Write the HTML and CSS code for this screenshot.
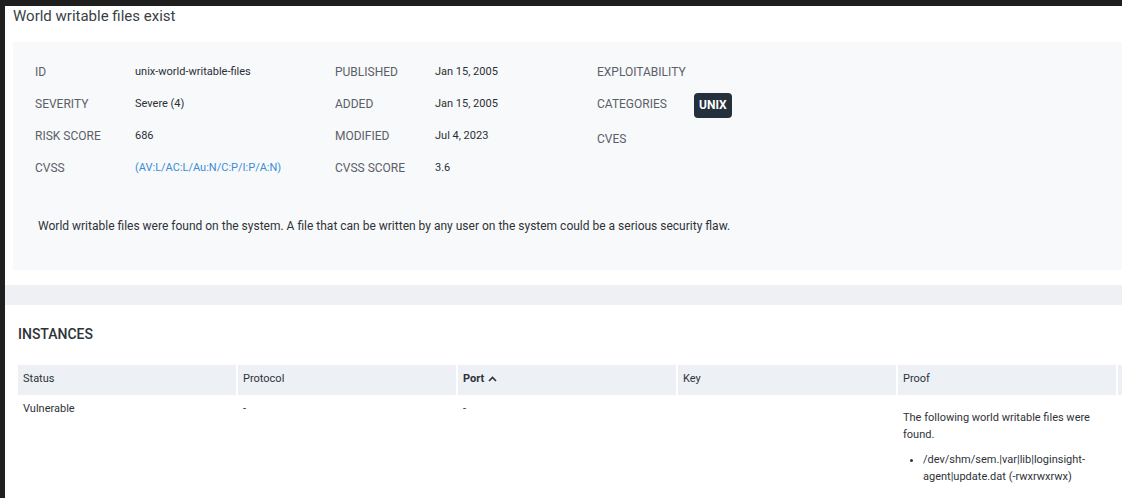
FILE: index.html
```html
<!DOCTYPE html>
<html lang="en">
<head>
    <meta charset="UTF-8">
    <title>World writable files exist</title>
    <link rel="stylesheet" href="styles.css">
</head>
<body>
    <div class="page">
        <h1 class="title">World writable files exist</h1>

        <div class="summary">
            <div class="fields">
                <div class="group group-1">
                    <div class="field"><span class="label">ID</span><span class="value">unix-world-writable-files</span></div>
                    <div class="field"><span class="label">SEVERITY</span><span class="value">Severe (4)</span></div>
                    <div class="field"><span class="label">RISK SCORE</span><span class="value">686</span></div>
                    <div class="field"><span class="label">CVSS</span><a class="value link" href="#">(AV:L/AC:L/Au:N/C:P/I:P/A:N)</a></div>
                </div>
                <div class="group group-2">
                    <div class="field"><span class="label">PUBLISHED</span><span class="value">Jan 15, 2005</span></div>
                    <div class="field"><span class="label">ADDED</span><span class="value">Jan 15, 2005</span></div>
                    <div class="field"><span class="label">MODIFIED</span><span class="value">Jul 4, 2023</span></div>
                    <div class="field"><span class="label">CVSS SCORE</span><span class="value">3.6</span></div>
                </div>
                <div class="group group-3">
                    <div class="field"><span class="label">EXPLOITABILITY</span><span class="value"></span></div>
                    <div class="field field-tags"><span class="label">CATEGORIES</span><span class="value"><span class="tag">UNIX</span></span></div>
                    <div class="field"><span class="label">CVES</span><span class="value"></span></div>
                </div>
            </div>
            <p class="description">World writable files were found on the system. A file that can be written by any user on the system could be a serious security flaw.</p>
        </div>

        <div class="divider"></div>

        <div class="instances">
            <h2>INSTANCES</h2>
            <table class="grid">
                <thead>
                    <tr>
                        <th>Status</th>
                        <th>Protocol</th>
                        <th class="sorted">Port <svg width="9" height="6" viewBox="0 0 9 6"><path d="M1 5 L4.5 1.5 L8 5" fill="none" stroke="#2e3338" stroke-width="1.6"/></svg></th>
                        <th>Key</th>
                        <th>Proof</th>
                        <th></th>
                    </tr>
                </thead>
                <tbody>
                    <tr>
                        <td>Vulnerable</td>
                        <td>-</td>
                        <td>-</td>
                        <td></td>
                        <td class="proof">
                            <p>The following world writable files were found.</p>
                            <ul>
                                <li>/dev/shm/sem.|var|lib|loginsight-agent|update.dat (-rwxrwxrwx)</li>
                            </ul>
                        </td>
                        <td></td>
                    </tr>
                </tbody>
            </table>
        </div>
    </div>
</body>
</html>
```

FILE: styles.css
```css
html, body {
    margin: 0;
    height: 100%;
}
body {
    font-family: Roboto, 'Liberation Sans', Arial, sans-serif;
    background-color: #1f1f1f;
    padding: 6px 0 0 5px;
    box-sizing: border-box;
    overflow: hidden;
}
.page {
    background: #ffffff;
    min-height: 100%;
    width: 1400px;
    color: #2e3338;
}
.title {
    margin: 0;
    padding: 1px 0 0 8px;
    font-size: 15px;
    font-weight: 400;
    line-height: 18px;
    color: #3a3f47;
    height: 35px;
}
.summary {
    margin-left: 8px;
    background-color: #f8f9fb;
    padding: 14px 22px 0;
    height: 228px;
    box-sizing: border-box;
}
.fields {
    display: flex;
}
.group {
    display: flex;
    flex-direction: column;
}
.group-1 {
    width: 300px;
}
.group-2 {
    width: 262px;
}
.field {
    display: flex;
    align-items: center;
    height: 32px;
    font-size: 12px;
}
.field-tags {
    height: 35px;
    align-items: flex-start;
}
.field-tags .label {
    line-height: 32px;
}
.label {
    color: #5b6068;
    width: 100px;
    flex-shrink: 0;
}
.group-3 .label {
    width: 97px;
}
.value {
    color: #2a2f35;
    font-size: 11px;
    margin-top: -1px;
}
.link {
    color: #3a8ed6;
    text-decoration: none;
}
.tag {
    display: inline-block;
    margin-top: 6px;
    background-color: #25303d;
    color: #ffffff;
    font-weight: 700;
    font-size: 12px;
    line-height: 25px;
    height: 25px;
    padding: 0 5px;
    border-radius: 4px;
}
.description {
    margin: 34px 0 0 3px;
    font-size: 12px;
    line-height: 16px;
    color: #2e3338;
}
.divider {
    margin-top: 15px;
    height: 20px;
    background-color: #eef0f4;
}
.instances {
    padding: 0 0 0 11px;
}
.instances h2 {
    margin: 0;
    padding: 21px 0 0 2px;
    font-size: 14px;
    font-weight: 500;
    line-height: 16px;
    color: #2e3338;
    height: 39px;
}
.grid {
    width: 1322px;
    border-collapse: separate;
    border-spacing: 2px 0;
    table-layout: fixed;
    font-size: 11px;
    color: #2e3338;
}
.grid th {
    background-color: #edf0f4;
    text-align: left;
    font-weight: 400;
    height: 30px;
    padding: 0 5px 4px;
    box-sizing: border-box;
}
.grid th.sorted {
    font-weight: 700;
}
.grid th svg {
    vertical-align: middle;
    margin-left: 1px;
}
.grid td {
    vertical-align: top;
    padding: 5px 5px;
    line-height: 17px;
}
.proof p {
    margin: 9px 0 8px;
}
.proof ul {
    margin: 0;
    padding-left: 20px;
}
```
